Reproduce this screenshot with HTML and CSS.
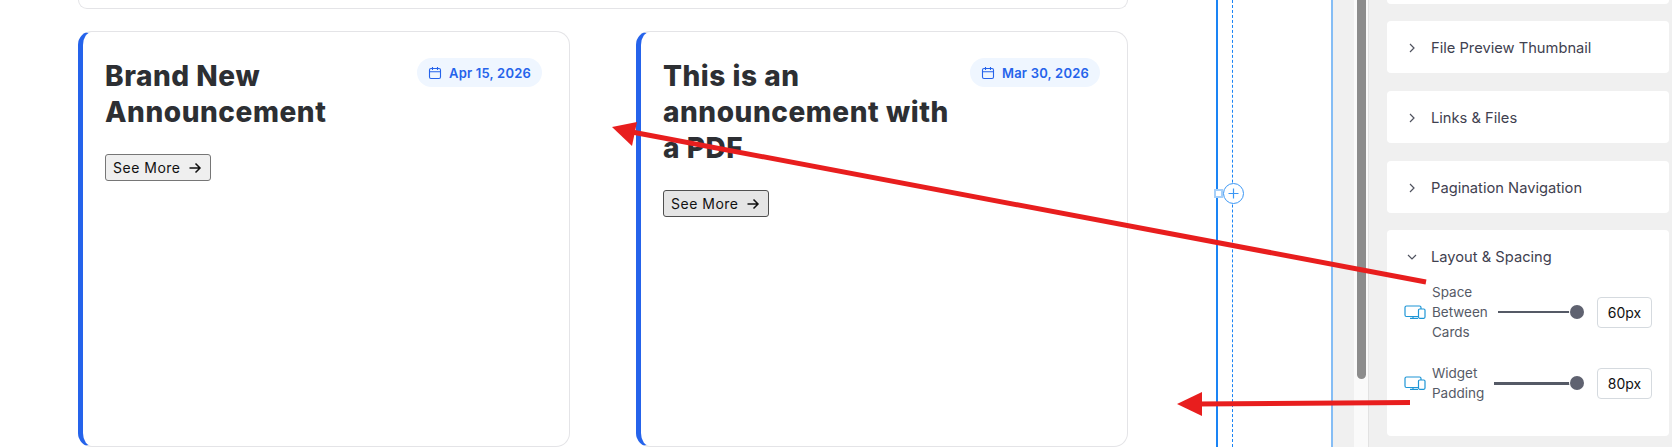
FILE: index.html
```html
<!DOCTYPE html>
<html>

<head>
<meta charset="utf-8">
<title>Announcements</title>
<link rel="stylesheet" href="styles.css">
</head>

<body>

<div class="canvas">
  <main class="content">
    <div class="prev-card"></div>
    <div class="cards">
      <article class="card">
        <div class="card-top">
          <h2>Brand New<br>Announcement</h2>
          <span class="date">
            <svg class="cal" viewBox="0 0 14 14"><rect x="1.5" y="2.5" width="11" height="10" rx="1.5"/><path d="M1.5 5.800h11M4.500 1v3M9.500 1v3"/></svg>
            Apr 15, 2026
          </span>
        </div>
        <button class="more">See More
          <svg class="arrow" viewBox="0 0 14 14"><path d="M1.500 7h10.500M7.500 2.500 12 7l-4.500 4.500"/></svg>
        </button>
      </article>
      <article class="card">
        <div class="card-top">
          <h2>This is an<br>announcement with<br>a PDF</h2>
          <span class="date">
            <svg class="cal" viewBox="0 0 14 14"><rect x="1.5" y="2.500" width="11" height="10" rx="1.5"/><path d="M1.500 5.800h11M4.500 1v3M9.500 1v3"/></svg>
            Mar 30, 2026
          </span>
        </div>
        <button class="more hover">See More
          <svg class="arrow" viewBox="0 0 14 14"><path d="M1.500 7h10.500M7.500 2.500 12 7l-4.500 4.500"/></svg>
        </button>
      </article>
    </div>
  </main>
  <div class="guide">
    <div class="dashed"></div>
    <span class="handle"></span>
    <span class="add">
      <svg viewBox="0 0 19 19"><path d="M9.500 4.500v10M4.500 9.500h10"/></svg>
    </span>
  </div>
</div>

<div class="gutter"></div>

<div class="scroll"><div class="thumb"></div></div>

<aside class="panel">
  <div class="group stub"></div>

  <div class="group">
    <div class="group-head">
      <svg class="chev" viewBox="0 0 10 10"><path d="M3 1l4 4-4 4"/></svg>
      File Preview Thumbnail
    </div>
  </div>

  <div class="group">
    <div class="group-head">
      <svg class="chev" viewBox="0 0 10 10"><path d="M3 1l4 4-4 4"/></svg>
      Links &amp; Files
    </div>
  </div>

  <div class="group">
    <div class="group-head">
      <svg class="chev" viewBox="0 0 10 10"><path d="M3 1l4 4-4 4"/></svg>
      Pagination Navigation
    </div>
  </div>

  <div class="group open">
    <div class="group-head">
      <svg class="chev" viewBox="0 0 10 10"><path d="M1 3l4 4 4-4"/></svg>
      Layout &amp; Spacing
    </div>

    <div class="setting first">
      <svg class="device" viewBox="0 0 22 14"><path d="M15 11.500H2.500a1.500 1.500 0 0 1-1.500-1.500V2.500A1.500 1.500 0 0 1 2.500 1h13A1.500 1.500 0 0 1 17 2.500V4M6 13.300h8M9 11.500v1.800"/><rect x="14.500" y="4" width="6.500" height="9.300" rx="1.200"/></svg>
      <label>Space<br>Between<br>Cards</label>
      <div class="slider"><span class="knob"></span></div>
      <div class="value">60px</div>
    </div>

    <div class="setting">
      <svg class="device" viewBox="0 0 22 14"><path d="M15 11.500H2.500a1.500 1.500 0 0 1-1.500-1.500V2.500A1.500 1.500 0 0 1 2.500 1h13A1.500 1.500 0 0 1 17 2.500V4M6 13.300h8M9 11.500v1.800"/><rect x="14.500" y="4" width="6.500" height="9.300" rx="1.200"/></svg>
      <label>Widget<br>Padding</label>
      <div class="slider thick"><span class="knob"></span></div>
      <div class="value">80px</div>
    </div>
  </div>
</aside>

<svg class="notes" viewBox="0 0 1672 447">
  <path d="M1426 282 632 132"/>
  <polygon points="612,127 637,122 632,146"/>
  <path d="M1410 402.500 1196 404"/>
  <polygon points="1177,404 1202,392 1202,416"/>
</svg>

</body>
</html>
```

FILE: styles.css
```css
* {
	box-sizing: border-box;
}

html, body {
	height: 100%;
}

body {
	margin: 0;
	display: flex;
	overflow: hidden;
	background: #ffffff;
	font-family: Inter, "Liberation Sans", sans-serif;
}

/* canvas */

.canvas {
	display: flex;
	width: 1333px;
	flex-shrink: 0;
	border-right: 2px solid #85bdf5;
}

.content {
	width: 1216px;
	flex-shrink: 0;
	padding-left: 78px;
}

.prev-card {
	width: 1050px;
	height: 9px;
	border: 1px solid #e4e4e7;
	border-top: none;
	border-radius: 0 0 12px 12px;
}

.cards {
	display: grid;
	grid-template-columns: 492px 492px;
	column-gap: 66px;
	margin-top: 22px;
}

.card {
	height: 416px;
	padding: 23px 27px 0 22px;
	background: #ffffff;
	border: 1px solid #e4e4e7;
	border-left: 5px solid #2563eb;
	border-radius: 14px;
}

.card-top {
	display: flex;
	justify-content: space-between;
	align-items: flex-start;
}

.card h2 {
	margin: 3px 0 0;
	font-size: 28px;
	line-height: 36px;
	font-weight: 800;
	letter-spacing: 0.550px;
	color: #2d2f33;
}

.date {
	display: flex;
	align-items: center;
	gap: 7px;
	height: 29px;
	margin-top: 3px;
	padding: 0 11px;
	border-radius: 15px;
	background: #eff6ff;
	color: #2563eb;
	font-size: 13px;
	font-weight: 600;
	letter-spacing: 0.2px;
	white-space: nowrap;
}

.cal {
	width: 14px;
	height: 14px;
	fill: none;
	stroke: #2563eb;
	stroke-width: 1.100;
}

.more {
	display: flex;
	align-items: center;
	gap: 7px;
	width: 106px;
	height: 27px;
	margin-top: 24px;
	padding: 0 7px;
	border: 1px solid #767676;
	border-radius: 3px;
	background: #efefef;
	color: #111111;
	font-family: Inter, sans-serif;
	font-size: 14px;
	letter-spacing: 0.5px;
}

.more.hover {
	background: #e5e5e5;
	border-color: #4f4f4f;
}

.arrow {
	width: 14px;
	height: 14px;
	fill: none;
	stroke: #111111;
	stroke-width: 1.500;
}

.guide {
	position: relative;
	flex: 1;
	border-left: 2px solid #1a84f5;
}

.dashed {
	height: 100%;
	margin-left: 14px;
	border-left: 1px dashed #1a84f5;
}

.handle {
	position: absolute;
	left: -4px;
	top: 189px;
	width: 9px;
	height: 9px;
	background: #ffffff;
	border: 2px solid #a5cff9;
}

.add {
	position: absolute;
	left: 5px;
	top: 183px;
	width: 21px;
	height: 21px;
	background: #ffffff;
	border: 1px solid #3b97f5;
	border-radius: 50%;
}

.add svg {
	display: block;
	width: 19px;
	height: 19px;
	fill: none;
	stroke: #3b97f5;
	stroke-width: 1.200;
}

/* editor chrome */

.gutter {
	width: 21px;
	flex-shrink: 0;
	background: #f0f0f0;
}

.scroll {
	width: 15px;
	flex-shrink: 0;
	padding: 0 2px 0 3px;
	background: #fafafa;
	border-right: 1px solid #e2e2e2;
}

.thumb {
	width: 9px;
	height: 379px;
	background: #8c8c8c;
	border-radius: 0 0 5px 5px;
}

.panel {
	flex: 1;
	padding: 0 3px 0 18px;
	background: #f0f0f0;
}

.group {
	height: 52px;
	margin-bottom: 18px;
	background: #ffffff;
	border-radius: 4px;
}

.group.stub {
	height: 4px;
	margin-bottom: 17px;
	border-radius: 0 0 4px 4px;
}

.group.open {
	height: 206px;
	margin-top: -1px;
	margin-bottom: 0;
}

.group-head {
	display: flex;
	align-items: center;
	height: 52px;
	padding: 1px 0 0 20px;
	color: #3f4150;
	font-size: 14.700px;
	font-weight: 420;
}

.chev {
	width: 10px;
	height: 10px;
	margin-right: 14px;
	fill: none;
	stroke: #50535f;
	stroke-width: 1.200;
}

.setting {
	display: flex;
	align-items: center;
	gap: 10px;
	padding: 0 17px;
	margin-top: 26px;
	height: 30px;
}

.setting.first {
	margin-top: 0;
	height: 60px;
}

.device {
	width: 22px;
	height: 14px;
	flex-shrink: 0;
	margin-right: -4px;
	fill: #ffffff;
	stroke: #1e96d6;
	stroke-width: 1.200;
}

.setting label {
	margin-top: -1px;
	font-size: 13.500px;
	line-height: 20px;
	color: #555a66;
}

.slider {
	position: relative;
	flex: 1;
	height: 2px;
	margin-right: 10px;
	background: #555a66;
}

.slider.thick {
	height: 3px;
}

.knob {
	position: absolute;
	right: -7px;
	top: 50%;
	width: 14px;
	height: 14px;
	margin-top: -7px;
	border-radius: 50%;
	background: #5f6270;
	box-shadow: 0 0 0 1px #ffffff;
}

.value {
	display: flex;
	align-items: center;
	justify-content: center;
	width: 55px;
	height: 31px;
	flex-shrink: 0;
	border: 1px solid #d5dadf;
	border-radius: 4px;
	background: #ffffff;
	color: #111111;
	font-size: 14px;
}

/* red annotation arrows drawn on top of the screenshot */

.notes {
	position: absolute;
	left: 0;
	top: 0;
	width: 1672px;
	height: 447px;
	pointer-events: none;
}

.notes path {
	fill: none;
	stroke: #e81e1e;
	stroke-width: 5;
}

.notes polygon {
	fill: #e81e1e;
}
```
